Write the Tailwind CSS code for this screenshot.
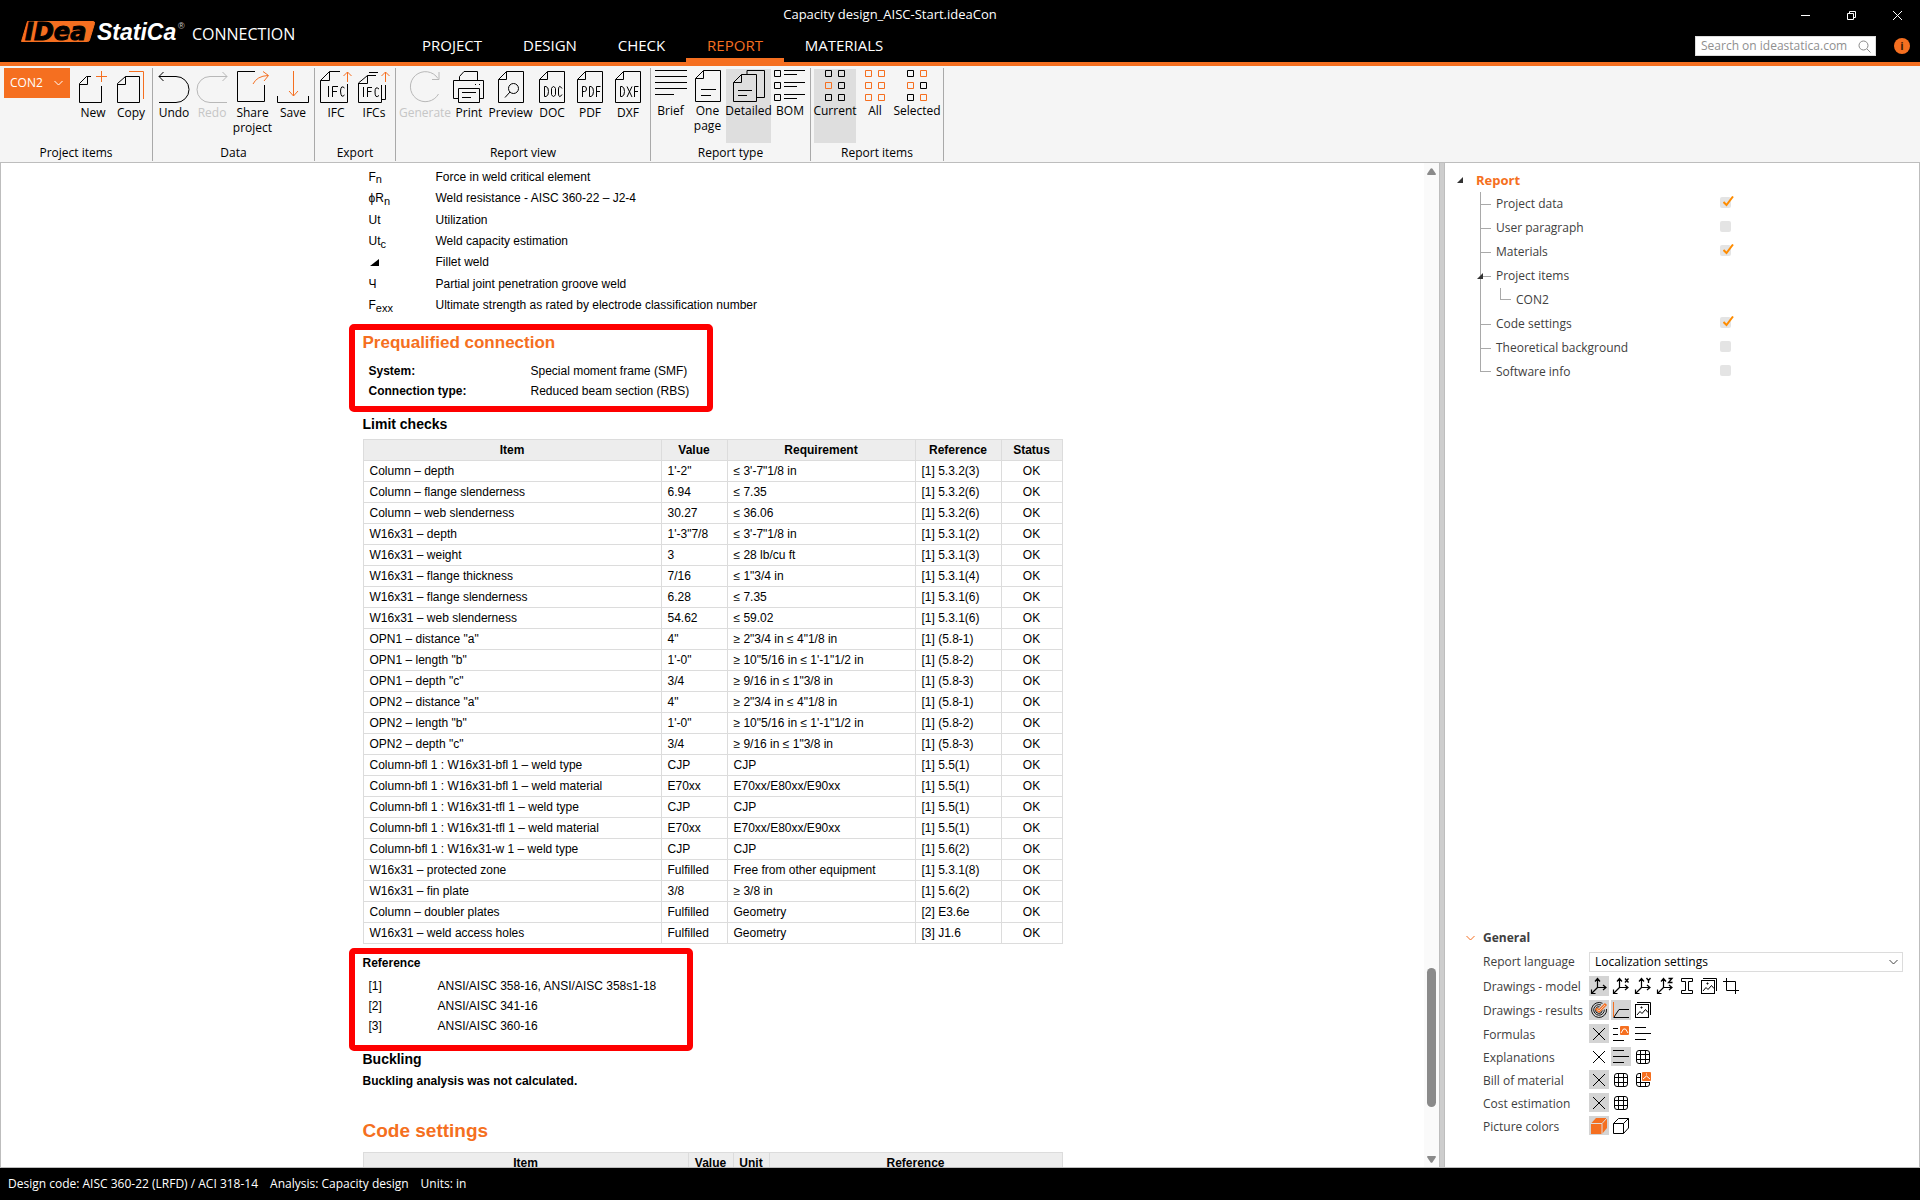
<!DOCTYPE html>
<html lang="en">
<head>
<meta charset="utf-8">
<title>Capacity design_AISC-Start.ideaCon</title>
<script src="https://cdn.jsdelivr.net/npm/@tailwindcss/browser@4"></script>
</head>
<body class="flex h-screen flex-col overflow-hidden bg-[#f5f5f5] font-['Open_Sans','Noto_Sans',sans-serif] text-[12px] leading-4 text-black">

<svg class="hidden" aria-hidden="true">
  <defs>
    <symbol id="page" viewBox="0 0 32 32"><path d="M11.5 .5H28.500V31.500H3.500V8.500ZM11.500 .5V8.500H3.500" /></symbol>
    <symbol id="axes" viewBox="0 0 18 18"><path d="M7.500 11V2M5 4.500L7.500 1.500L10 4.500M7.500 10.500H16M13 8L16 10.500L13 13M7.500 10.500L2 16M1.500 12.500V16.500H5.500" stroke-width="1.200" /></symbol>
    <symbol id="cross" viewBox="0 0 18 18"><path d="M3 3L15 15M15 3L3 15" /></symbol>
    <symbol id="lines" viewBox="0 0 18 18"><path d="M1 2.500H12M1 8.500H17M1 14.500H12" /></symbol>
    <symbol id="grid" viewBox="0 0 18 18"><rect x="2.500" y="2.500" width="13" height="13" rx="2.500" /><path d="M6.500 2.500V15.500M11.500 2.500V15.500M2.500 6.500H15.500M2.500 11.500H15.500" /></symbol>
    <symbol id="pics" viewBox="0 0 18 18"><rect x="1.500" y="3.500" width="13" height="13" /><path d="M3 1.500H16.500V14M3 14L6 10.500L8 12.500L11.500 8.500L14 11.500" /><path d="M7 6h1v1h-1z" /></symbol>
  </defs>
</svg>

<header class="flex h-[66px] shrink-0 border-b-4 border-[#f56f20] bg-black text-white">
  <div class="flex w-[401px] items-start pt-[20px] pl-5">
    <svg class="h-[24px] w-[166px]" viewBox="0 0 166 24" role="img" aria-label="IDEA StatiCa">
      <path d="M7.500 1.500H73Q75 1.500 74.500 3.500L69.500 20Q69 21.500 67.500 21.500H1.500Z" fill="#f56f20" stroke="#f56f20" />
      <text x="5" y="20" font-family="DejaVu Sans" font-weight="700" font-style="italic" font-size="24" fill="#000" stroke="#000">IDea</text>
      <text x="77" y="20" font-family="Liberation Sans" font-weight="700" font-style="italic" font-size="23" fill="#fff">StatiCa</text>
      <text x="158" y="9" font-family="Liberation Sans" font-size="9" fill="#ccc">®</text>
    </svg>
    <span class="ml-[6px] pt-[2px] text-[16px] leading-6">CONNECTION</span>
  </div>
  <nav class="flex items-stretch pt-[28px] text-[15px] leading-[34px]">
    <a href="#" class="w-[102px] text-center">PROJECT</a>
    <a href="#" class="w-[94px] text-center">DESIGN</a>
    <a href="#" class="w-[89px] text-center">CHECK</a>
    <a href="#" class="w-[98px] border-b-4 border-[#f56f20] text-center text-[#f56f20]">REPORT</a>
    <a href="#" class="w-[120px] text-center">MATERIALS</a>
  </nav>
  <h1 class="absolute top-[6px] left-0 w-[1780px] max-w-full text-center text-[13px]">Capacity design_AISC-Start.ideaCon</h1>
  <div class="ml-auto flex flex-col items-end">
    <div class="flex h-[30px]">
      <button class="grid w-[46px] place-items-center" aria-label="Minimize"><svg class="size-[11px]" viewBox="0 0 11 11" fill="none" stroke="#fff"><path d="M1 5.500H10" /></svg></button>
      <button class="grid w-[46px] place-items-center" aria-label="Restore"><svg class="size-[11px]" viewBox="0 0 11 11" fill="none" stroke="#fff"><path d="M1.500 3.500H7.500V9.500H1.500ZM3.500 3V1.500H9.500V7.500H8" /></svg></button>
      <button class="grid w-[46px] place-items-center" aria-label="Close"><svg class="size-[11px]" viewBox="0 0 11 11" fill="none" stroke="#fff"><path d="M1 1L10 10M10 1L1 10" /></svg></button>
    </div>
    <div class="flex items-center gap-[18px] pt-[6px] pr-[10px]">
      <label class="flex h-5 w-[181px] items-center border border-[#dcdcdc] bg-white pr-1">
        <input type="text" placeholder="Search on ideastatica.com" aria-label="Search" class="w-full min-w-0 pl-[5px] text-[12px] text-black outline-none placeholder:text-[#8f8f8f]">
        <svg class="size-[13px] shrink-0" viewBox="0 0 13 13" fill="none" stroke="#8a8a8a"><circle cx="5.500" cy="5.500" r="4.500" /><path d="M9 9L12.500 12.500" /></svg>
      </label>
      <button class="size-4 rounded-full bg-[#f56f20] text-[11px] leading-4 font-bold text-[#3a1a05]" aria-label="Information">i</button>
    </div>
  </div>
</header>

<div class="flex h-[97px] shrink-0 border-b border-[#bdbdbd] pt-[2px] [&_button]:flex [&_button]:flex-col [&_button]:items-center [&_button]:leading-[15px] [&_h2]:mt-auto [&_h2]:text-center [&_h2]:leading-4 [&_section]:flex [&_section]:flex-col [&_section]:border-r [&_section]:border-[#a9a9a9] [&_svg]:mb-[2px] [&_svg]:size-8 [&_svg]:shrink-0 [&_svg]:fill-none [&_svg]:stroke-black">
  <section class="mb-px w-[153px]">
    <div class="flex pl-1">
      <div class="relative h-[30px] w-[66px] bg-[#f56f20] text-white">
        <select aria-label="Project item" class="h-full w-full appearance-none pl-[6px] outline-none"><option>CON2</option></select>
        <svg class="pointer-events-none absolute top-[11px] right-[7px] h-[8px]! w-[9px]! stroke-white!" viewBox="0 0 9 8"><path d="M.5 2L4.500 6L8.500 2" /></svg>
      </div>
      <div class="flex pl-[4px] pt-[3px]">
        <button class="w-[38px]"><svg viewBox="0 0 32 32"><path d="M14 5.500H9.500L2.500 12.500V31.500H24.500V15M10.500 5.500V13.500H2.500" /><path d="M24.500 0V11M19 5.500H30" stroke="#f56f20" /></svg>New</button>
        <button class="w-[38px]"><svg viewBox="0 0 32 32"><path d="M10.500 5.500H24.500V31.500H2.500V12.500ZM10.500 5.500V13.500H2.500" /><path d="M14 .5H28.500V28" stroke="#f56f20" /></svg>Copy</button>
      </div>
    </div>
    <h2>Project items</h2>
  </section>
  <section class="mb-px w-[162px]">
    <div class="flex pt-[3px] pl-[2px]">
      <button class="w-[38px]"><svg viewBox="0 0 32 32"><path d="M1 5.500H18A13 13 0 0 1 18 31.500H1M5.500 1L1 5.500L5.500 10" /></svg>Undo</button>
      <button class="w-[38px] text-[#c6c6c6]" disabled><svg viewBox="0 0 32 32" style="stroke:#b8b8b8"><path d="M31 5.500H14A13 13 0 0 0 14 31.500H31M26.500 1L31 5.500L26.500 10" /></svg>Redo</button>
      <button class="w-[43px]"><svg viewBox="0 0 32 32"><path d="M18 .5H.5V30.500H27.500V14" /><path d="M16 13Q20 5 31 4.500M26 .5L31.500 4.500L27 10" stroke="#f56f20" /></svg>Share project</button>
      <button class="w-[38px]"><svg viewBox="0 0 32 32"><path d="M.5 25V31.500H31.500V25" /><path d="M16.500 0V25M12 20L16.500 25L21 20" stroke="#f56f20" /></svg>Save</button>
    </div>
    <h2>Data</h2>
  </section>
  <section class="mb-px w-[81px]">
    <div class="flex pt-[3px] pl-[2px]">
      <button class="w-[38px]"><svg viewBox="0 0 32 32"><path d="M20 .5H9.500L.5 9.500V31.500H27.500V13M9.500 .5V9.500H.5" /><path d="M27.500 11V1M23.500 5L27.500 1L31.500 5" stroke="#f56f20" /><path d="M8.500 15V26M12.500 26V15.500H18M12.500 20.500H17M24.500 17Q21 13.500 20.500 20Q21 28 24.500 24" /></svg>IFC</button>
      <button class="w-[38px]"><svg viewBox="0 0 32 32"><path d="M18 4.500H9.500L.5 12V31.500H23.500V14M9.500 4.500V12.500H.5M20 1.500H11M27.500 14V28.500H24" /><path d="M27.500 11V1M23.500 5L27.500 1L31.500 5" stroke="#f56f20" /><path d="M5.500 16V26M9.500 26V16.500H14M9.500 20.500H13.500M21 18Q17 14.500 17 21Q17 28 21 24.500" /></svg>IFCs</button>
    </div>
    <h2>Export</h2>
  </section>
  <section class="mb-px w-[255px]">
    <div class="flex pt-[3px] pl-[4px]">
      <button class="w-[50px] text-[#c6c6c6]" disabled><svg viewBox="0 0 32 32" style="stroke:#b8b8b8"><path d="M29.500 23A15 15 0 1 1 29 7.500M30 1V8.500H23" /></svg>Generate</button>
      <button class="w-[38px]"><svg viewBox="0 0 32 32"><path d="M6.500 9V5.500L11 .5H24.500V9M5 27.500H.5V9.500H30.500V27.500H27M5.500 17.500H26.500V31.500H5.500ZM9 21.500H23M9 26.500H18M22 13.500h1M26 13.500h1" /></svg>Print</button>
      <button class="w-[45px]"><svg viewBox="0 0 32 32"><use href="#page" /><circle cx="18.500" cy="17.500" r="5" /><path d="M15 21L10 26.500" /></svg>Preview</button>
      <button class="w-[38px]"><svg viewBox="0 0 32 32"><use href="#page" /><path d="M8.500 15.500V25.500H10Q12.500 25 12.500 20.500T10 15.500ZM15.500 17.500Q17.500 13.500 19.500 17.500V23.500Q17.500 27.500 15.500 23.500ZM26 17.500Q23 13 22.500 18V23Q23 28 26 23.500" /></svg>DOC</button>
      <button class="w-[38px]"><svg viewBox="0 0 32 32"><use href="#page" /><path d="M8.500 26V15.500H10.500Q12.500 15.500 12.500 18T10.500 20.500H8.500M15.500 15.500V25.500H17Q19.500 25 19.500 20.500T17 15.500ZM22.500 26V15.500H26.500M22.500 20.500H26" /></svg>PDF</button>
      <button class="w-[38px]"><svg viewBox="0 0 32 32"><use href="#page" /><path d="M8.500 15.500V25.500H10Q12.500 25 12.500 20.500T10 15.500ZM15 15.500L20 26M20 15.500L15 26M22.500 26V15.500H26.500M22.500 20.500H26" /></svg>DXF</button>
    </div>
    <h2>Report view</h2>
  </section>
  <section class="mb-px w-[160px] [&_button]:h-[74px] [&_button]:pt-px [&_svg]:mb-px!">
    <div class="flex pt-px pl-px">
      <button class="w-[37px]"><svg viewBox="0 0 32 32"><path d="M0 .5H32M0 6.500H32M0 12.500H32M0 18.500H32M0 24.500H19" /></svg>Brief</button>
      <button class="w-[37px]"><svg viewBox="0 0 32 32"><use href="#page" /><path d="M9 19.500H24M9 25.500H19" /></svg>One page</button>
      <button class="w-[45px] bg-[#dedede]"><svg viewBox="0 0 32 32"><path d="M8.500 4.500H23.500V31.500H.5V12.500ZM8.500 4.500V12.500H.5M14 4V.5H31.500V27.500H24M5 20.500H19M5 25.500H14" /></svg>Detailed</button>
      <button class="w-[38px]"><svg viewBox="0 0 32 32"><path d="M.5 .5H6.500V6.500H.5ZM.5 12.500H6.500V18.500H.5ZM.5 24.500H6.500V30.500H.5ZM10 .5H31M10 4.500H23M10 12.500H31M10 16.500H23M10 24.500H31M10 28.500H23" /></svg>BOM</button>
    </div>
    <h2>Report type</h2>
  </section>
  <section class="mb-px w-[133px] [&_button]:h-[74px] [&_button]:pt-px [&_svg]:mb-px!">
    <div class="flex pt-px pl-[3px]">
      <button class="w-[42px] bg-[#dedede]"><svg viewBox="0 0 32 32"><path d="M6.500 .5h6v6h-6zM19.500 .5h6v6h-6zM19.500 12.500h6v6h-6zM6.500 24.500h6v6h-6zM19.500 24.500h6v6h-6z" /><path d="M6.500 12.500h6v6h-6z" stroke="#f56f20" /></svg>Current</button>
      <button class="w-[38px]"><svg viewBox="0 0 32 32" style="stroke:#f56f20"><path d="M6.500 .5h6v6h-6zM19.500 .5h6v6h-6zM6.500 12.500h6v6h-6zM19.500 12.500h6v6h-6zM6.500 24.500h6v6h-6zM19.500 24.500h6v6h-6z" /></svg>All</button>
      <button class="w-[46px]"><svg viewBox="0 0 32 32"><path d="M6.500 .5h6v6h-6zM19.500 12.500h6v6h-6zM6.500 24.500h6v6h-6z" /><path d="M19.500 .5h6v6h-6zM6.500 12.500h6v6h-6zM19.500 24.500h6v6h-6z" stroke="#f56f20" /></svg>Selected</button>
    </div>
    <h2>Report items</h2>
  </section>
</div>

<main class="flex min-h-0 flex-1 border-b border-[#bdbdbd] bg-white">
  <div class="flex min-w-0 flex-1 border-x border-[#bdbdbd]">
    <article class="min-w-0 flex-1 overflow-hidden font-['Liberation_Sans',Arial,sans-serif] leading-4">
      <div class="mx-auto w-[700px]">
        <table class="mt-[3px] ml-[6px] h-[150px] text-left [&_sub]:text-[11px] [&_sub]:leading-none [&_td]:py-0 [&_th]:w-[67px] [&_th]:py-0 [&_th]:font-normal">
          <tr><th>F<sub>n</sub></th><td>Force in weld critical element</td></tr>
          <tr><th>ϕR<sub>n</sub></th><td>Weld resistance - AISC 360-22 – J2-4</td></tr>
          <tr><th>Ut</th><td>Utilization</td></tr>
          <tr><th>Ut<sub>c</sub></th><td>Weld capacity estimation</td></tr>
          <tr><th><svg class="ml-px size-[9px]" viewBox="0 0 9 9"><path d="M0 8L9 1V8Z" /></svg></th><td>Fillet weld</td></tr>
          <tr><th>Ч</th><td>Partial joint penetration groove weld</td></tr>
          <tr><th>F<sub>exx</sub></th><td>Ultimate strength as rated by electrode classification number</td></tr>
        </table>
        <section class="mt-[8px] -ml-[14px] h-[88px] w-[364px] rounded-[5px] border-6 border-[#fe0000] pt-[4px] pl-2">
          <h2 class="text-[17px] leading-[18px] font-bold text-[#f56f20]">Prequalified connection</h2>
          <table class="mt-[9px] ml-[6px] text-left leading-5 [&_th]:w-[162px]">
            <tr><th>System:</th><td>Special moment frame (SMF)</td></tr>
            <tr><th>Connection type:</th><td>Reduced beam section (RBS)</td></tr>
          </table>
        </section>
        <h3 class="mt-[4px] text-[14px] leading-4 font-bold">Limit checks</h3>
        <table class="mt-[7px] w-full table-fixed border-collapse [&_td]:h-[21px] [&_td]:border [&_td]:border-[#dcdcdc] [&_td]:px-[6px] [&_td]:py-0 [&_td:last-child]:text-center [&_th]:h-[21px] [&_th]:border [&_th]:border-[#dcdcdc] [&_th]:bg-[#ededed]">
          <thead><tr><th class="w-[298px]">Item</th><th class="w-[66px]">Value</th><th class="w-[188px]">Requirement</th><th class="w-[86px]">Reference</th><th>Status</th></tr></thead>
          <tbody>
          <tr><td>Column – depth</td><td>1'-2"</td><td>≤ 3'-7"1/8 in</td><td>[1] 5.3.2(3)</td><td>OK</td></tr>
          <tr><td>Column – flange slenderness</td><td>6.94</td><td>≤ 7.35</td><td>[1] 5.3.2(6)</td><td>OK</td></tr>
          <tr><td>Column – web slenderness</td><td>30.27</td><td>≤ 36.06</td><td>[1] 5.3.2(6)</td><td>OK</td></tr>
          <tr><td>W16x31 – depth</td><td>1'-3"7/8</td><td>≤ 3'-7"1/8 in</td><td>[1] 5.3.1(2)</td><td>OK</td></tr>
          <tr><td>W16x31 – weight</td><td>3</td><td>≤ 28 lb/cu ft</td><td>[1] 5.3.1(3)</td><td>OK</td></tr>
          <tr><td>W16x31 – flange thickness</td><td>7/16</td><td>≤ 1"3/4 in</td><td>[1] 5.3.1(4)</td><td>OK</td></tr>
          <tr><td>W16x31 – flange slenderness</td><td>6.28</td><td>≤ 7.35</td><td>[1] 5.3.1(6)</td><td>OK</td></tr>
          <tr><td>W16x31 – web slenderness</td><td>54.62</td><td>≤ 59.02</td><td>[1] 5.3.1(6)</td><td>OK</td></tr>
          <tr><td>OPN1 – distance "a"</td><td>4"</td><td>≥ 2"3/4 in ≤ 4"1/8 in</td><td>[1] (5.8-1)</td><td>OK</td></tr>
          <tr><td>OPN1 – length "b"</td><td>1'-0"</td><td>≥ 10"5/16 in ≤ 1'-1"1/2 in</td><td>[1] (5.8-2)</td><td>OK</td></tr>
          <tr><td>OPN1 – depth "c"</td><td>3/4</td><td>≥ 9/16 in ≤ 1"3/8 in</td><td>[1] (5.8-3)</td><td>OK</td></tr>
          <tr><td>OPN2 – distance "a"</td><td>4"</td><td>≥ 2"3/4 in ≤ 4"1/8 in</td><td>[1] (5.8-1)</td><td>OK</td></tr>
          <tr><td>OPN2 – length "b"</td><td>1'-0"</td><td>≥ 10"5/16 in ≤ 1'-1"1/2 in</td><td>[1] (5.8-2)</td><td>OK</td></tr>
          <tr><td>OPN2 – depth "c"</td><td>3/4</td><td>≥ 9/16 in ≤ 1"3/8 in</td><td>[1] (5.8-3)</td><td>OK</td></tr>
          <tr><td>Column-bfl 1 : W16x31-bfl 1 – weld type</td><td>CJP</td><td>CJP</td><td>[1] 5.5(1)</td><td>OK</td></tr>
          <tr><td>Column-bfl 1 : W16x31-bfl 1 – weld material</td><td>E70xx</td><td>E70xx/E80xx/E90xx</td><td>[1] 5.5(1)</td><td>OK</td></tr>
          <tr><td>Column-bfl 1 : W16x31-tfl 1 – weld type</td><td>CJP</td><td>CJP</td><td>[1] 5.5(1)</td><td>OK</td></tr>
          <tr><td>Column-bfl 1 : W16x31-tfl 1 – weld material</td><td>E70xx</td><td>E70xx/E80xx/E90xx</td><td>[1] 5.5(1)</td><td>OK</td></tr>
          <tr><td>Column-bfl 1 : W16x31-w 1 – weld type</td><td>CJP</td><td>CJP</td><td>[1] 5.6(2)</td><td>OK</td></tr>
          <tr><td>W16x31 – protected zone</td><td>Fulfilled</td><td>Free from other equipment</td><td>[1] 5.3.1(8)</td><td>OK</td></tr>
          <tr><td>W16x31 – fin plate</td><td>3/8</td><td>≥ 3/8 in</td><td>[1] 5.6(2)</td><td>OK</td></tr>
          <tr><td>Column – doubler plates</td><td>Fulfilled</td><td>Geometry</td><td>[2] E3.6e</td><td>OK</td></tr>
          <tr><td>W16x31 – weld access holes</td><td>Fulfilled</td><td>Geometry</td><td>[3] J1.6</td><td>OK</td></tr>
          </tbody>
        </table>
        <section class="mt-1 -ml-[14px] h-[103px] w-[344px] rounded-[5px] border-6 border-[#fe0000] pt-[1px] pl-2">
          <h3 class="font-bold">Reference</h3>
          <table class="mt-[5px] ml-[6px] text-left leading-5 [&_th]:w-[69px] [&_th]:font-normal">
            <tr><th>[1]</th><td>ANSI/AISC 358-16, ANSI/AISC 358s1-18</td></tr>
            <tr><th>[2]</th><td>ANSI/AISC 341-16</td></tr>
            <tr><th>[3]</th><td>ANSI/AISC 360-16</td></tr>
          </table>
        </section>
        <h3 class="text-[14px] leading-4 font-bold">Buckling</h3>
        <p class="mt-[6px] font-bold">Buckling analysis was not calculated.</p>
        <h2 class="mt-[30px] text-[19px] leading-6 font-bold text-[#f56f20]">Code settings</h2>
        <table class="mt-[9px] w-full table-fixed border-collapse [&_th]:h-[21px] [&_th]:border [&_th]:border-[#dcdcdc] [&_th]:bg-[#ededed]">
          <thead><tr><th class="w-[325px]">Item</th><th class="w-[45px]">Value</th><th class="w-[36px]">Unit</th><th>Reference</th></tr></thead>
        </table>
      </div>
    </article>
    <div class="flex w-[15px] flex-col items-center bg-[#fafafa] pt-[5px] pb-[4px]" aria-hidden="true">
      <svg class="h-[7px] w-[9px]" viewBox="0 0 9 7" fill="#8a8a8a"><path d="M3.500 .8Q4.500 -.5 5.500 .8L9 6Q9 7 8 7H1Q0 7 0 6Z" /></svg>
      <div class="flex-1"></div>
      <div class="h-[139px] w-[9px] rounded-full bg-[#8a8a8a]"></div>
      <div class="h-[49px]"></div>
      <svg class="h-[7px] w-[9px]" viewBox="0 0 9 7" fill="#8a8a8a"><path d="M3.500 6.200Q4.500 7.500 5.500 6.200L9 1Q9 0 8 0H1Q0 0 0 1Z" /></svg>
    </div>
  </div>
  <div class="w-1 bg-[#cdcdcd]"></div>
  <aside class="flex w-[476px] shrink-0 flex-col border-x border-[#bdbdbd] text-[#404040]">
    <div class="flex items-center pt-[5px] pl-[12px] leading-6">
      <svg class="size-[6px]" viewBox="0 0 6 6" fill="#333"><path d="M0 6H6V0Z" /></svg>
      <span class="pl-[13px] text-[13px] font-bold text-[#f56f20]">Report</span>
    </div>
    <ul class="ml-[35px] leading-6 [&_input]:size-[11px] [&_input]:appearance-none [&_input]:rounded-[2px] [&_input]:bg-[#e4e4e4] [&_label]:flex-1 [&_li]:flex [&_li]:h-6 [&_li]:items-center [&_li]:pr-[188px] [&_li>i]:mr-[5px] [&_li>i]:w-[10px] [&_li>i]:border-t [&_li>i]:border-[#a9a9a9]">
      <li class="border-l border-[#a9a9a9]"><i></i><label for="c1">Project data</label><span class="relative flex pb-[3px]"><input id="c1" type="checkbox" checked><svg class="pointer-events-none absolute -top-px left-[3px] h-[11px] w-[11px]" viewBox="0 0 11 11" fill="none" stroke="#ff8c00" stroke-width="2"><path d="M.5 6L3.500 9L10 .5" /></svg></span></li>
      <li class="border-l border-[#a9a9a9]"><i></i><label for="c2">User paragraph</label><span class="flex pb-[3px]"><input id="c2" type="checkbox"></span></li>
      <li class="border-l border-[#a9a9a9]"><i></i><label for="c3">Materials</label><span class="relative flex pb-[3px]"><input id="c3" type="checkbox" checked><svg class="pointer-events-none absolute -top-px left-[3px] h-[11px] w-[11px]" viewBox="0 0 11 11" fill="none" stroke="#ff8c00" stroke-width="2"><path d="M.5 6L3.500 9L10 .5" /></svg></span></li>
      <li class="relative border-l border-[#a9a9a9]"><i></i><svg class="absolute top-[9px] -left-[4px] size-[6px]" viewBox="0 0 6 6" fill="#333"><path d="M0 6H6V0Z" /></svg>Project items</li>
      <li class="border-l border-[#a9a9a9]"><b class="mr-[5px] mb-3 ml-[19px] h-3 w-[11px] border-b border-l border-[#a9a9a9]"></b>CON2</li>
      <li class="border-l border-[#a9a9a9]"><i></i><label for="c4">Code settings</label><span class="relative flex pb-[3px]"><input id="c4" type="checkbox" checked><svg class="pointer-events-none absolute -top-px left-[3px] h-[11px] w-[11px]" viewBox="0 0 11 11" fill="none" stroke="#ff8c00" stroke-width="2"><path d="M.5 6L3.500 9L10 .5" /></svg></span></li>
      <li class="border-l border-[#a9a9a9]"><i></i><label for="c5">Theoretical background</label><span class="flex pb-[3px]"><input id="c5" type="checkbox"></span></li>
      <li><b class="mr-[5px] mb-3 h-3 w-[11px] border-b border-l border-[#a9a9a9]"></b><label for="c6">Software info</label><span class="flex pb-[3px]"><input id="c6" type="checkbox"></span></li>
    </ul>

    <section class="mt-auto mb-[28px] pr-4 pl-[21px]">
      <h2 class="flex items-center leading-6 font-bold"><svg class="mr-2 h-[6px] w-[9px]" viewBox="0 0 9 6" fill="none" stroke="#f56f20"><path d="M.5 1L4.500 5L8.500 1" /></svg>General</h2>
      <div class="grid grid-cols-[106px_1fr] pl-[17px] [&_button]:grid [&_button]:h-full [&_button]:w-5 [&_button]:place-items-center [&_div]:flex [&_div]:gap-[2px] [&_svg]:size-[18px] [&_svg]:fill-none [&_svg]:stroke-black [&>*]:mb-1 [&>div]:h-[19px] [&>span]:pt-[3px]">
        <label for="lang" class="pt-1">Report language</label>
        <span class="relative mt-[2px] flex h-5 p-0!">
          <select id="lang" class="w-full appearance-none border border-[#dcdcdc] bg-white pl-[5px] text-black outline-none"><option>Localization settings</option></select>
          <svg class="pointer-events-none absolute top-[6px] right-[5px] h-[8px]! w-[9px]! stroke-[#444]!" viewBox="0 0 9 8"><path d="M.5 2L4.500 6L8.500 2" /></svg>
        </span>
        <span>Drawings - model</span>
        <div class="h-5!">
          <button class="bg-[#d4d4d4]" aria-label="Axonometric"><svg><use href="#axes" /></svg></button>
          <button aria-label="View X"><svg viewBox="0 0 18 18"><use href="#axes" /><path d="M13 1.500L16.500 5.500M16.500 1.500L13 5.500" stroke-width="1.300" /></svg></button>
          <button aria-label="View Y"><svg viewBox="0 0 18 18"><use href="#axes" /><path d="M12.500 1L14.500 3.500V6M16.500 1L14.500 3.500" stroke-width="1.300" /></svg></button>
          <button aria-label="View Z"><svg viewBox="0 0 18 18"><use href="#axes" /><path d="M12.500 1.500H16L12.500 5.500H16.500" stroke-width="1.300" /></svg></button>
          <button aria-label="Section"><svg viewBox="0 0 18 18"><path d="M3.500 1.500H14.500V4.500H10.500V13.500H14.500V16.500H3.500V13.500H7.500V4.500H3.500Z" /></svg></button>
          <button aria-label="Pictures"><svg><use href="#pics" /></svg></button>
          <button aria-label="Crop"><svg viewBox="0 0 18 18"><path d="M4.500 1V13.500H17M1 4.500H13.500V17" /></svg></button>
        </div>
        <span>Drawings - results</span>
        <div class="h-5!">
          <button class="bg-[#d4d4d4]" aria-label="Overall check"><svg viewBox="0 0 18 18"><path d="M12.500 2.300A7.500 7.500 0 1 0 16.500 8M11 4A5.300 5.300 0 1 0 14.300 8.500M9.500 5.700A3.400 3.400 0 1 0 12.300 9.500" stroke-width=".9" /><path d="M6 7.500L9 10L16 3" stroke="#f56f20" stroke-width="3" /><path d="M7 8.500L9 10L15 4" stroke="#eee" stroke-width=".7" /></svg></button>
          <button class="bg-[#d4d4d4]" aria-label="Diagram"><svg viewBox="0 0 18 18"><path d="M1.500 16.500H17M2 16L7 8.500H17" /><path d="M1.500 1V16" stroke="#f56f20" /></svg></button>
          <button aria-label="Result pictures"><svg><use href="#pics" /></svg></button>
        </div>
        <span>Formulas</span>
        <div>
          <button class="bg-[#d4d4d4]" aria-label="None"><svg><use href="#cross" /></svg></button>
          <button aria-label="Brief formulas"><svg viewBox="0 0 18 18"><path d="M1 3.500H6M1 9.500H6M1 15.500H12" /><rect x="8" y="1" width="9" height="9" rx="1" fill="#f56f20" stroke="none" /><path d="M9 8L11.500 4H13.500L16 8" stroke="#fff" /></svg></button>
          <button aria-label="All formulas"><svg><use href="#lines" /></svg></button>
        </div>
        <span>Explanations</span>
        <div>
          <button aria-label="None"><svg><use href="#cross" /></svg></button>
          <button class="bg-[#d4d4d4]" aria-label="Text"><svg><use href="#lines" /></svg></button>
          <button aria-label="Table"><svg><use href="#grid" /></svg></button>
        </div>
        <span>Bill of material</span>
        <div>
          <button class="bg-[#d4d4d4]" aria-label="None"><svg><use href="#cross" /></svg></button>
          <button aria-label="Table"><svg><use href="#grid" /></svg></button>
          <button aria-label="Table with pictures"><svg viewBox="0 0 18 18"><use href="#grid" /><path d="M7 0H18V11H7Z" fill="#fff" stroke="none" /><rect x="8" y="1" width="9" height="9" rx="1" fill="#f56f20" stroke="none" /><path d="M9 8L12.500 5L16 8M12 3h1" stroke="#fff" /></svg></button>
        </div>
        <span>Cost estimation</span>
        <div>
          <button class="bg-[#d4d4d4]" aria-label="None"><svg><use href="#cross" /></svg></button>
          <button aria-label="Table"><svg><use href="#grid" /></svg></button>
        </div>
        <span>Picture colors</span>
        <div>
          <button class="bg-[#d4d4d4]" aria-label="Colored"><svg viewBox="0 0 18 18"><path d="M1 6.500L6 1H17V11L12 17H1Z" fill="#f56f20" stroke="none" /><path d="M1 6.500H12V17M12 6.500L17 1" stroke="#ddd" /></svg></button>
          <button aria-label="White"><svg viewBox="0 0 18 18"><path d="M1.500 6.500L6.500 1.500H16.500V11L11.500 16.500H1.500ZM1.500 6.500H11.500V16.500M11.500 6.500L16.500 1.500" /></svg></button>
        </div>
      </div>
    </section>
  </aside>
</main>

<footer class="flex h-8 shrink-0 items-center gap-3 bg-black px-2 text-white">
  <span>Design code: AISC 360-22 (LRFD) / ACI 318-14</span>
  <span>Analysis: Capacity design</span>
  <span>Units: in</span>
</footer>
</body>
</html>
